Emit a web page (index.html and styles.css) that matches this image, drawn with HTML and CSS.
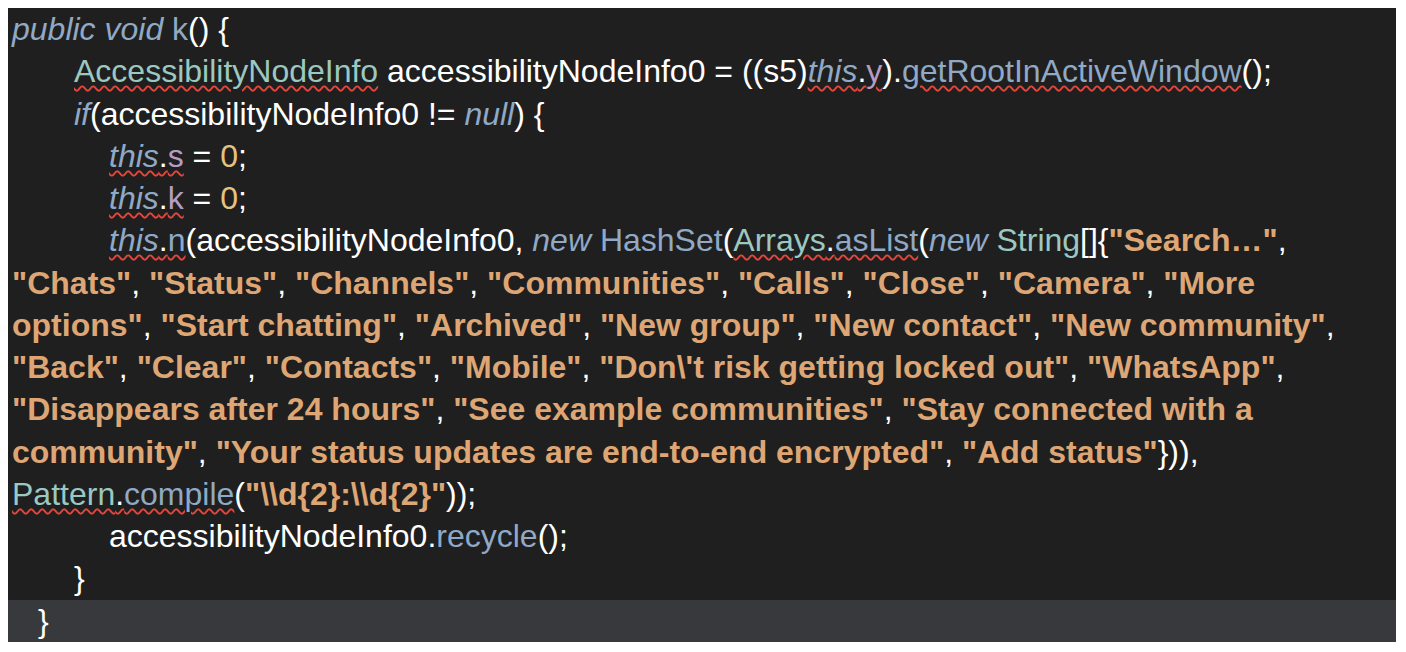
FILE: index.html
```html
<!DOCTYPE html>
<html>
<head>
<meta charset="utf-8">
<link rel="stylesheet" href="styles.css">
</head>
<body>
<div class="editor">
<div class="line i0"><span class="kw">public void</span> <span class="fn">k</span>() {</div>
<div class="line i1"><span class="cls err">AccessibilityNodeInfo</span> accessibilityNodeInfo0 = ((s5)<span class="err"><span class="kw">this</span>.<span class="fld">y</span></span>).<span class="mth err">getRootInActiveWindow</span>();</div>
<div class="line i1"><span class="kw">if</span>(accessibilityNodeInfo0 != <span class="kw">null</span>) {</div>
<div class="line i2"><span class="err"><span class="kw">this</span>.<span class="fld">s</span></span> = <span class="num">0</span>;</div>
<div class="line i2"><span class="err"><span class="kw">this</span>.<span class="fld">k</span></span> = <span class="num">0</span>;</div>
<div class="line i2"><span class="err"><span class="kw">this</span>.<span class="mth">n</span></span>(accessibilityNodeInfo0, <span class="kw">new</span> <span class="mth">HashSet</span>(<span class="err"><span class="cls">Arrays</span>.<span class="mth">asList</span></span>(<span class="kw">new</span> <span class="cls">String</span>[]{<span class="str">"Search…"</span>,</div>
<div class="line i0"><span class="str">"Chats"</span>, <span class="str">"Status"</span>, <span class="str">"Channels"</span>, <span class="str">"Communities"</span>, <span class="str">"Calls"</span>, <span class="str">"Close"</span>, <span class="str">"Camera"</span>, <span class="str">"More</span></div>
<div class="line i0"><span class="str">options"</span>, <span class="str">"Start chatting"</span>, <span class="str">"Archived"</span>, <span class="str">"New group"</span>, <span class="str">"New contact"</span>, <span class="str">"New community"</span>,</div>
<div class="line i0"><span class="str">"Back"</span>, <span class="str">"Clear"</span>, <span class="str">"Contacts"</span>, <span class="str">"Mobile"</span>, <span class="str">"Don\'t risk getting locked out"</span>, <span class="str">"WhatsApp"</span>,</div>
<div class="line i0"><span class="str">"Disappears after 24 hours"</span>, <span class="str">"See example communities"</span>, <span class="str">"Stay connected with a</span></div>
<div class="line i0"><span class="str">community"</span>, <span class="str">"Your status updates are end-to-end encrypted"</span>, <span class="str">"Add status"</span>})),</div>
<div class="line i0"><span class="err"><span class="cls">Pattern</span>.<span class="mth">compile</span></span>(<span class="str">"\\d{2}:\\d{2}"</span>));</div>
<div class="line i2">accessibilityNodeInfo0.<span class="mth">recycle</span>();</div>
<div class="line i1b">}</div>
<div class="line i0b current">}</div>
</div>
</body>
</html>
```
FILE: styles.css
```css
html, body {
  margin: 0;
  padding: 0;
  background: #ffffff;
}
.editor {
  margin: 8px;
  width: 1388px;
  height: 634px;
  background: #1f1f1f;
  font-family: "Liberation Sans", Arial, sans-serif;
  font-size: 32px;
  color: #ffffff;
}
.line {
  height: 42.27px;
  line-height: 42.27px;
  white-space: pre;
}
.i0 { padding-left: 4px; }
.i1 { padding-left: 66px; }
.i2 { padding-left: 101px; }
.i1b { padding-left: 66px; }
.i0b { padding-left: 30px; }
.current { background: #38393d; }
.kw { font-style: italic; color: #8fa9c6; }
.fn { color: #8fa9c6; }
.cls { color: #9bc8c1; }
.mth { color: #8fa9c6; }
.fld { color: #b79cc2; }
.num { color: #e6c27f; }
.str { color: #dda674; font-weight: bold; }
.err {
  text-decoration: underline wavy #e5463c;
  text-decoration-thickness: 1.5px;
  text-underline-offset: 3px;
}
```
